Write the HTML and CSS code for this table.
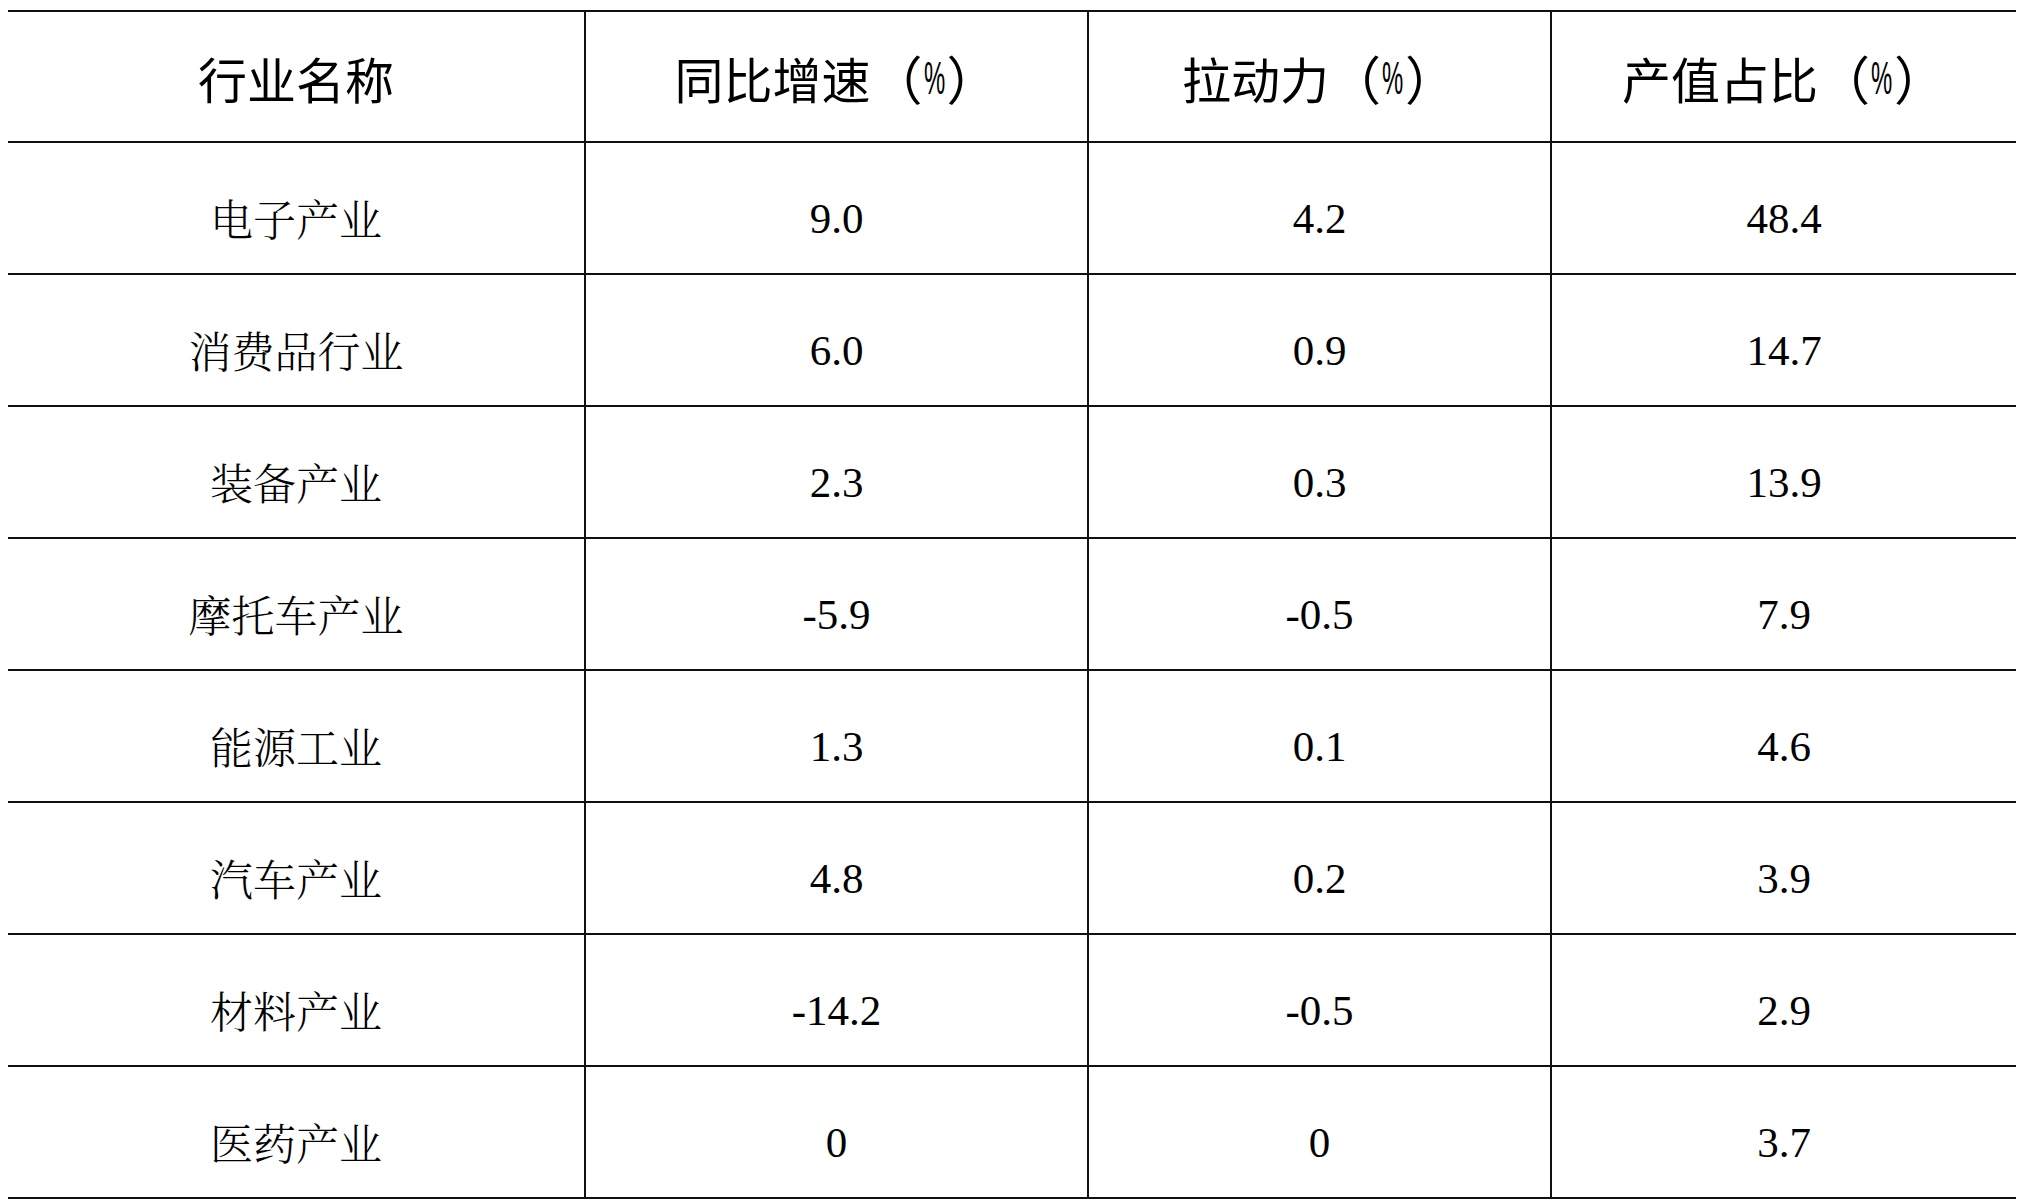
FILE: index.html
```html
<!DOCTYPE html>
<html lang="zh-CN">
<head>
<meta charset="utf-8">
<title>行业数据</title>
<link rel="stylesheet" href="styles.css">
</head>
<body>
<div class="table">
  <div class="cell head">行业名称</div>
  <div class="cell head col">同比增速<span class="paren">（</span><span class="pct">%</span><span class="paren">）</span></div>
  <div class="cell head col">拉动力<span class="paren">（</span><span class="pct">%</span><span class="paren">）</span></div>
  <div class="cell head col">产值占比<span class="paren">（</span><span class="pct">%</span><span class="paren">）</span></div>

  <div class="cell name">电子产业</div>
  <div class="cell num col">9.0</div>
  <div class="cell num col">4.2</div>
  <div class="cell num col">48.4</div>

  <div class="cell name">消费品行业</div>
  <div class="cell num col">6.0</div>
  <div class="cell num col">0.9</div>
  <div class="cell num col">14.7</div>

  <div class="cell name">装备产业</div>
  <div class="cell num col">2.3</div>
  <div class="cell num col">0.3</div>
  <div class="cell num col">13.9</div>

  <div class="cell name">摩托车产业</div>
  <div class="cell num col">-5.9</div>
  <div class="cell num col">-0.5</div>
  <div class="cell num col">7.9</div>

  <div class="cell name">能源工业</div>
  <div class="cell num col">1.3</div>
  <div class="cell num col">0.1</div>
  <div class="cell num col">4.6</div>

  <div class="cell name">汽车产业</div>
  <div class="cell num col">4.8</div>
  <div class="cell num col">0.2</div>
  <div class="cell num col">3.9</div>

  <div class="cell name">材料产业</div>
  <div class="cell num col">-14.2</div>
  <div class="cell num col">-0.5</div>
  <div class="cell num col">2.9</div>

  <div class="cell name">医药产业</div>
  <div class="cell num col">0</div>
  <div class="cell num col">0</div>
  <div class="cell num col">3.7</div>
</div>
</body>
</html>
```
FILE: styles.css
```css
html, body {
  margin: 0;
  padding: 0;
  background: #ffffff;
}

.table {
  display: grid;
  grid-template-columns: 576px 503px 463px 466px;
  grid-template-rows: 131px repeat(8, 132px);
  width: 2008px;
  margin: 10px 0 0 8px;
  border-top: 2px solid #111111;
  color: #000000;
}

.cell {
  box-sizing: border-box;
  border-bottom: 2px solid #111111;
  display: flex;
  align-items: center;
  justify-content: center;
  white-space: nowrap;
}

.col {
  border-left: 2px solid #111111;
}

.head {
  font-family: "Noto Sans CJK SC", "Noto Sans", sans-serif;
  font-size: 49px;
  font-weight: 400;
  line-height: 1;
  padding-top: 2px;
}

.paren {
  font-size: 52px;
  font-weight: 400;
  line-height: 1;
}

.pct {
  display: inline-block;
  width: 24px;
  text-align: center;
  font-family: "Liberation Sans", sans-serif;
  font-size: 46px;
  transform: scaleX(0.52);
  line-height: 1;
  overflow: visible;
  white-space: nowrap;
  text-indent: -9px;
}

.name {
  font-family: "Noto Serif CJK SC", "Noto Sans CJK SC", serif;
  font-weight: 300;
  font-size: 43px;
  padding-top: 18px;
}

.num {
  font-family: "Liberation Serif", serif;
  font-size: 43px;
  padding-top: 20px;
}
```
